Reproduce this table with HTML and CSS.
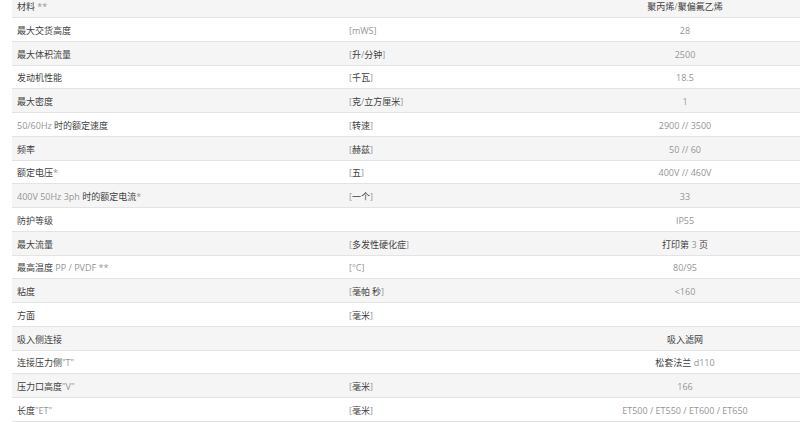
FILE: index.html
```html
<!DOCTYPE html>
<html lang="zh">
<head>
<meta charset="utf-8">
<title>技术参数</title>
<link rel="stylesheet" href="styles.css">
</head>
<body>
<div class="spec">
  <div class="row alt"><div class="c1"><span class="zh">材料</span> **</div><div class="c2"></div><div class="c3"><span class="zh">聚丙烯</span>/<span class="zh">聚偏氟乙烯</span></div></div>
  <div class="row"><div class="c1"><span class="zh">最大交货高度</span></div><div class="c2">[mWS]</div><div class="c3">28</div></div>
  <div class="row alt"><div class="c1"><span class="zh">最大体积流量</span></div><div class="c2">[<span class="zh">升</span>/<span class="zh">分钟</span>]</div><div class="c3">2500</div></div>
  <div class="row"><div class="c1"><span class="zh">发动机性能</span></div><div class="c2">[<span class="zh">千瓦</span>]</div><div class="c3">18.5</div></div>
  <div class="row alt"><div class="c1"><span class="zh">最大密度</span></div><div class="c2">[<span class="zh">克</span>/<span class="zh">立方厘米</span>]</div><div class="c3">1</div></div>
  <div class="row"><div class="c1">50/60Hz <span class="zh">时的额定速度</span></div><div class="c2">[<span class="zh">转速</span>]</div><div class="c3">2900 // 3500</div></div>
  <div class="row alt"><div class="c1"><span class="zh">频率</span></div><div class="c2">[<span class="zh">赫兹</span>]</div><div class="c3">50 // 60</div></div>
  <div class="row"><div class="c1"><span class="zh">额定电压</span>*</div><div class="c2">[<span class="zh">五</span>]</div><div class="c3">400V // 460V</div></div>
  <div class="row alt"><div class="c1">400V 50Hz 3ph <span class="zh">时的额定电流</span>*</div><div class="c2">[<span class="zh">一个</span>]</div><div class="c3">33</div></div>
  <div class="row"><div class="c1"><span class="zh">防护等级</span></div><div class="c2"></div><div class="c3">IP55</div></div>
  <div class="row alt"><div class="c1"><span class="zh">最大流量</span></div><div class="c2">[<span class="zh">多发性硬化症</span>]</div><div class="c3"><span class="zh">打印第</span> 3 <span class="zh">页</span></div></div>
  <div class="row"><div class="c1"><span class="zh">最高温度</span> PP / PVDF **</div><div class="c2">[°C]</div><div class="c3">80/95</div></div>
  <div class="row alt"><div class="c1"><span class="zh">粘度</span></div><div class="c2">[<span class="zh">毫帕 秒</span>]</div><div class="c3">&lt;160</div></div>
  <div class="row"><div class="c1"><span class="zh">方面</span></div><div class="c2">[<span class="zh">毫米</span>]</div><div class="c3"></div></div>
  <div class="row alt"><div class="c1"><span class="zh">吸入侧连接</span></div><div class="c2"></div><div class="c3"><span class="zh">吸入滤网</span></div></div>
  <div class="row"><div class="c1"><span class="zh">连接压力侧</span>"T"</div><div class="c2"></div><div class="c3"><span class="zh">松套法兰</span> d110</div></div>
  <div class="row alt"><div class="c1"><span class="zh">压力口高度</span>"V"</div><div class="c2">[<span class="zh">毫米</span>]</div><div class="c3">166</div></div>
  <div class="row"><div class="c1"><span class="zh">长度</span>"ET"</div><div class="c2">[<span class="zh">毫米</span>]</div><div class="c3">ET500 / ET550 / ET600 / ET650</div></div>
</div>
</body>
</html>
```
FILE: styles.css
```css
html, body {
  margin: 0;
  padding: 0;
  background: #ffffff;
}
body {
  font-family: "Open Sans", "Noto Sans CJK SC", sans-serif;
  font-size: 9px;
  color: #959595;
  overflow: hidden;
}
.spec {
  margin: -5.75px 0 0 12px;
  width: 788px;
}
.row {
  display: grid;
  grid-template-columns: 332px 226px 1fr;
  height: 23.75px;
  box-sizing: border-box;
  border-bottom: 1px solid #e3e3e3;
  align-items: center;
  line-height: 12px;
  padding-top: 3px;
}
.row.alt {
  background: #f5f5f5;
}
.c1 {
  padding-left: 5px;
  white-space: nowrap;
}
.c2 {
  padding-left: 5px;
  white-space: nowrap;
}
.c3 {
  text-align: center;
  white-space: nowrap;
}
.zh {
  font-family: "Noto Sans CJK SC", sans-serif;
  color: #3f3f3f;
}
```
